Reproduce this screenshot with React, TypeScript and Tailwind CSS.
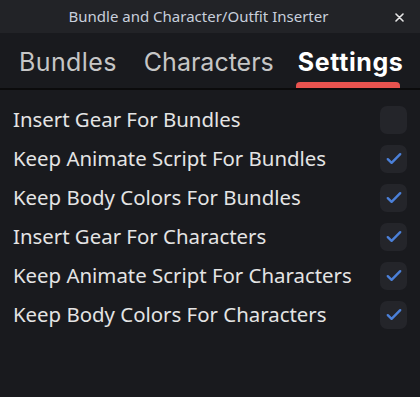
import React from "react";

const rows: { label: string; checked: boolean }[] = [
  { label: "Insert Gear For Bundles", checked: false },
  { label: "Keep Animate Script For Bundles", checked: true },
  { label: "Keep Body Colors For Bundles", checked: true },
  { label: "Insert Gear For Characters", checked: true },
  { label: "Keep Animate Script For Characters", checked: true },
  { label: "Keep Body Colors For Characters", checked: true },
];

function Check() {
  return (
    <svg width="16" height="13" viewBox="0 0 16 13" fill="none">
      <path d="M1.8 7.2 L5.6 10.8 L14.2 2.2" stroke="#4b80d9" strokeWidth="2.4" strokeLinecap="round" strokeLinejoin="round" />
    </svg>
  );
}

export default function App() {
  return (
    <div className="w-[420px] h-[397px] bg-[#191a1e] flex flex-col overflow-hidden" style={{ fontFamily: '"Noto Sans", sans-serif' }}>
      <div className="h-[33px] bg-[#222327] flex items-center justify-center relative shrink-0 pr-[23px]">
        <span className="text-[15px] text-[#c8cfdc]">Bundle and Character/Outfit Inserter</span>
        <svg className="absolute left-[395px] top-[13px]" width="9" height="9" viewBox="0 0 9 9">
          <path d="M1 1 L8 8 M8 1 L1 8" stroke="#e6e6e6" strokeWidth="1.6" strokeLinecap="round" />
        </svg>
      </div>
      <div className="h-[57px] flex items-end border-b-2 border-[#0b0b0c] shrink-0" style={{ fontFamily: "Inter, sans-serif" }}>
        <div className="flex items-end pl-[19px] w-full">
          <div className="text-[25px] text-[#c6c6c6] pb-[13px] leading-none tracking-[0.4px]">Bundles</div>
          <div className="text-[25px] text-[#c6c6c6] pb-[13px] leading-none ml-[27px]">Characters</div>
          <div className="flex flex-col items-start ml-[24px]">
            <div className="text-[25px] text-white font-bold leading-none pb-[7px] tracking-[0.6px]">Settings</div>
            <div className="w-[104px] h-[6px] bg-[#e8534f] rounded-t-[4px] -ml-[2px]" />
          </div>
        </div>
      </div>
      <div className="flex flex-col pt-[10px]">
        {rows.map((r) => (
          <div key={r.label} className="h-[39px] flex items-center justify-between pl-[13px] pr-[13px]">
            <span className="text-[20.4px] text-[#e4e4e4]">{r.label}</span>
            <div className="w-[27px] h-[28px] rounded-[7px] bg-[#24252a] flex items-center justify-center">
              {r.checked && <Check />}
            </div>
          </div>
        ))}
      </div>
    </div>
  );
}
